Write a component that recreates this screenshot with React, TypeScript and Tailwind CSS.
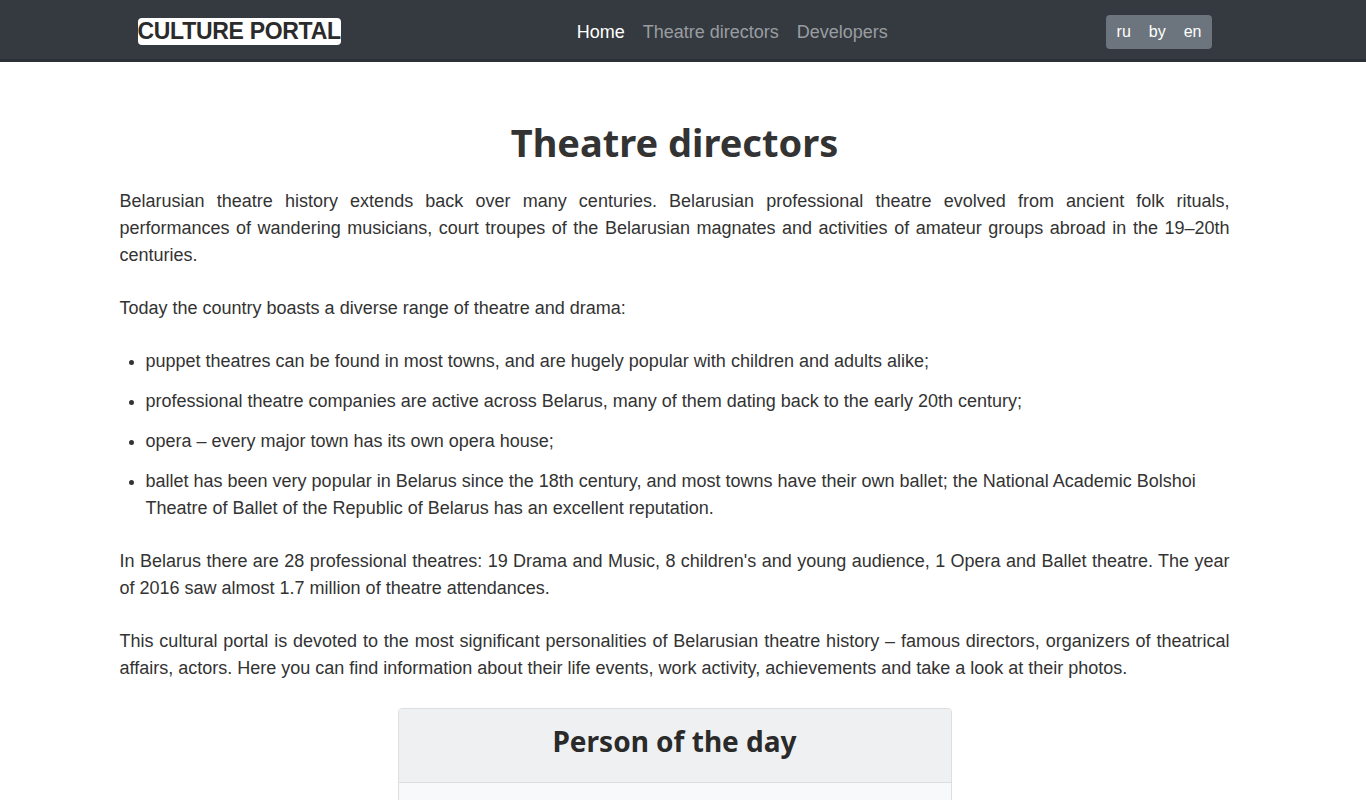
import React from 'react';

const sans = { fontFamily: '"Liberation Sans", Arial, sans-serif' };
const head = { fontFamily: '"Noto Sans", "Open Sans", sans-serif' };

function Navbar() {
  return (
    <nav className="h-[62px] bg-[#343a40] border-b-[3px] border-[#2c3136] pr-[17px]">
      <div className="mx-auto w-[1110px] h-full flex items-center px-[18px] pt-[4px]">
        <a className="bg-white rounded-[4px] text-[#2b2b2b] font-bold text-[23px] leading-[27px] h-[27px] tracking-[-0.3px]">
          CULTURE PORTAL
        </a>
        <ul className="flex items-center ml-[236px] gap-[18px] text-[18px] pt-[1px]">
          <li className="text-white">Home</li>
          <li className="text-[#9a9da0]">Theatre directors</li>
          <li className="text-[#9a9da0]">Developers</li>
        </ul>
        <div className="ml-auto flex h-[34px] rounded-[4px] bg-[#6c757d] text-white text-[16px] overflow-hidden">
          <button className="pl-[11px] pr-[9px]">ru</button>
          <button className="px-[9px]">by</button>
          <button className="pl-[9px] pr-[10px]">en</button>
        </div>
      </div>
    </nav>
  );
}

export default function App() {
  return (
    <div className="min-h-[800px] bg-white text-[#333]" style={sans}>
      <Navbar />
      <main className="pr-[17px]">
        <div className="mx-auto w-[1110px] text-[18px] leading-[27px]">
          <h1
            className="text-center text-[38px] font-bold leading-[48px] text-[#333] pt-[56px] pb-[22px]"
            style={head}
          >
            Theatre directors
          </h1>
          <p className="text-justify mb-[26px]">
            Belarusian theatre history extends back over many centuries. Belarusian professional theatre evolved from ancient folk rituals, performances of wandering musicians, court troupes of the Belarusian magnates and activities of amateur groups abroad in the 19–20th centuries.
          </p>
          <p className="mb-[26px]">Today the country boasts a diverse range of theatre and drama:</p>
          <ul className="list-disc pl-[26px] mb-[26px] space-y-[13px]">
            <li>puppet theatres can be found in most towns, and are hugely popular with children and adults alike;</li>
            <li>professional theatre companies are active across Belarus, many of them dating back to the early 20th century;</li>
            <li>opera – every major town has its own opera house;</li>
            <li>ballet has been very popular in Belarus since the 18th century, and most towns have their own ballet; the National Academic Bolshoi Theatre of Ballet of the Republic of Belarus has an excellent reputation.</li>
          </ul>
          <p className="text-justify mb-[26px]">
            In Belarus there are 28 professional theatres: 19 Drama and Music, 8 children's and young audience, 1 Opera and Ballet theatre. The year of 2016 saw almost 1.7 million of theatre attendances.
          </p>
          <p className="text-justify mb-[26px]">
            This cultural portal is devoted to the most significant personalities of Belarusian theatre history – famous directors, organizers of theatrical affairs, actors. Here you can find information about their life events, work activity, achievements and take a look at their photos.
          </p>
          <div className="mx-auto w-[554px] border border-[#dcdee0] rounded-[4px] overflow-hidden">
            <div className="h-[74px] bg-[#eff0f2] border-b border-[#dcdee0] flex items-center justify-center pb-[8px]">
              <h2 className="text-[28px] font-bold text-[#2a2a2a]" style={head}>
                Person of the day
              </h2>
            </div>
            <div className="h-[200px] bg-[#f8f9fa]" />
          </div>
        </div>
      </main>
    </div>
  );
}
